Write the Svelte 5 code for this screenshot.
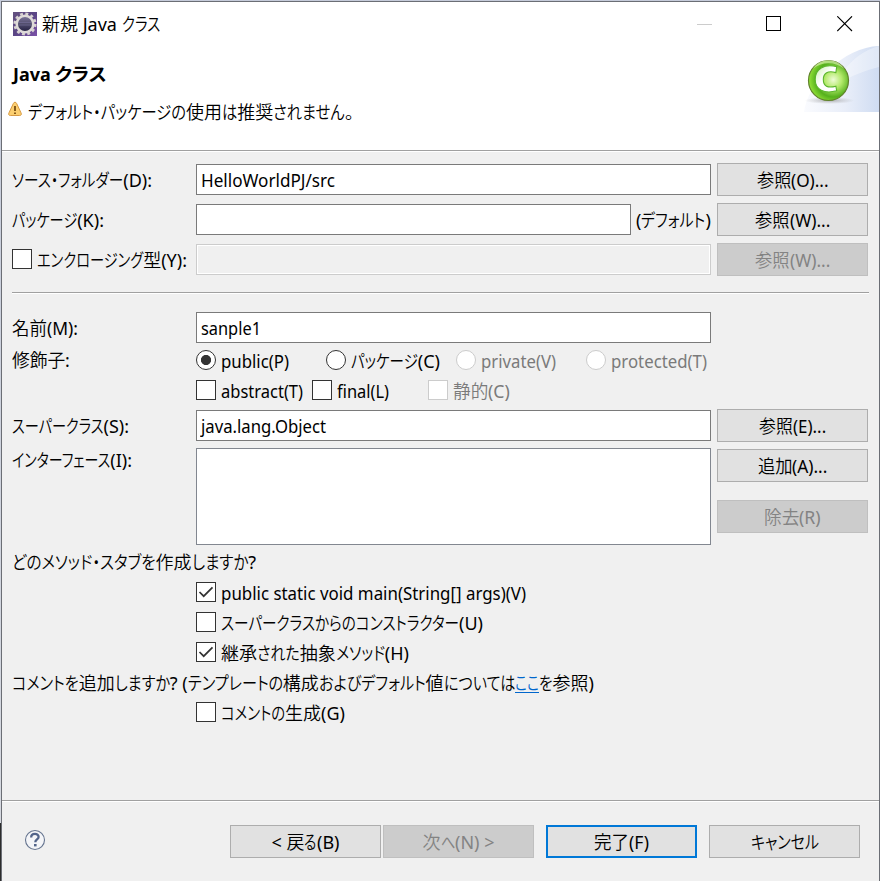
<script>
    let pkg = $state('');
    let name = $state('sanple1');

    const access = [
        { label: 'public(P)', width: 68, checked: true },
        { label: 'パッケージ(C)', width: 89 },
        { label: 'private(V)', width: 75, disabled: true },
        { label: 'protected(T)', width: 96, disabled: true },
    ];

    const modifiers = [
        { label: 'abstract(T)', width: 82 },
        { label: 'final(L)', width: 52 },
        { label: '静的(C)', width: 57, disabled: true },
    ];

    const stubs = [
        { label: 'public static void main(String[] args)(V)', width: 305, checked: true },
        { label: 'スーパークラスからのコンストラクター(U)', width: 262 },
        { label: '継承された抽象メソッド(H)', width: 188, checked: true },
    ];

    // kana are set narrower than kanji and latin, so they get their own runs
    function split(str) {
        return str.match(/[\u3041-\u30ff]+|[\u3001-\u3002\u4e00-\u9fff]+|[ -~]+/g) ?? [];
    }

    function isKana(run) {
        return /[\u3041-\u30ff]/.test(run);
    }

    function isKanji(run) {
        return /[\u3001-\u3002\u4e00-\u9fff]/.test(run);
    }

    // squeeze the kana runs (or the whole text when there are none) to the wanted width
    function fit(node, width) {
        const runs = [...node.children];
        const kana = runs.filter((r) => r.classList.contains('kana'));
        const flexible = kana.length ? kana : runs;
        const total = runs.reduce((sum, r) => sum + r.getBoundingClientRect().width, 0);
        const flex = flexible.reduce((sum, r) => sum + r.getBoundingClientRect().width, 0);
        const k = (width - (total - flex)) / flex;
        for (const r of flexible) {
            const w = r.getBoundingClientRect().width;
            r.style.width = `${w * k}px`;
            r.firstElementChild.style.transform = `scaleX(${k})`;
        }
    }
</script>

{#snippet text(str, width)}
    <span class="text" use:fit={width}>{#each split(str) as run}<span class="run" class:kana={isKana(run)} class:kanji={isKanji(run)}><span class="glyphs">{run}</span></span>{/each}</span>
{/snippet}

{#snippet button(str, width, kind = '')}
    <button class="btn {kind}" disabled={kind === 'disabled'}>{@render text(str, width)}</button>
{/snippet}

{#snippet check(item)}
    <label class="option" class:off={item.disabled}>
        <span class="box">
            {#if item.checked}
                <svg width="18" height="18" viewBox="0 0 18 18"><path d="M2.5 9 L6.7 13.2 L15.5 4.4" fill="none" stroke="#333" stroke-width="1.7" /></svg>
            {/if}
        </span>
        {@render text(item.label, item.width)}
    </label>
{/snippet}

<div class="desktop">
    <div class="window">
        <div class="titlebar">
            <svg class="app-icon" width="24" height="24" viewBox="0 0 24 24">
                <defs>
                    <linearGradient id="purple" x1="0" y1="0" x2="1" y2="1">
                        <stop offset="0" stop-color="#64527f" />
                        <stop offset="0.5" stop-color="#5a4585" />
                        <stop offset="1" stop-color="#7b52a8" />
                    </linearGradient>
                    <linearGradient id="hole" x1="0" y1="0" x2="0" y2="1">
                        <stop offset="0" stop-color="#8078a0" />
                        <stop offset="0.45" stop-color="#555170" />
                        <stop offset="1" stop-color="#1f1b3f" />
                    </linearGradient>
                </defs>
                <rect width="24" height="24" fill="url(#purple)" />
                <circle cx="12" cy="12" r="10.3" fill="none" stroke="#d8d3d2" stroke-width="2.6" stroke-dasharray="2.9 2.5" />
                <circle cx="12" cy="12" r="8.3" fill="url(#hole)" stroke="#dedad8" stroke-width="2.6" />
                <path d="M5.5 10.5h13M5.5 13h13" stroke="#706a92" stroke-width="0.8" />
            </svg>
            {@render text('新規 Java クラス', 118)}
            <div class="controls">
                <svg width="16" height="16" viewBox="0 0 16 16"><path d="M0 8.5h15" stroke="#ccc" /></svg>
                <svg width="16" height="16" viewBox="0 0 16 16"><rect x="0.5" y="0.5" width="14" height="14" fill="none" stroke="#000" /></svg>
                <svg width="16" height="16" viewBox="0 0 16 16"><path d="M0.3 0.3 L15 15 M15 0.3 L0.3 15" stroke="#000" stroke-width="1.1" /></svg>
            </div>
        </div>

        <header>
            <div class="heading">
                <h1>{@render text('Java クラス', 94)}</h1>
                <p>
                    <svg width="14" height="16" viewBox="0 0 14 16">
                        <path d="M7 1.2 C7.9 1.2 8.3 1.8 8.7 2.6 L13 11.8 C13.8 13.5 13.2 14.5 11.7 14.5 H2.3 C0.8 14.5 0.2 13.5 1 11.8 L5.3 2.6 C5.7 1.8 6.1 1.2 7 1.2Z" fill="#fccf70" stroke="#d79a45" />
                        <path d="M7 5v5M7 11.4v1.6" stroke="#70450b" stroke-width="1.7" />
                    </svg>
                    {@render text('デフォルト・パッケージの使用は推奨されません。', 335)}
                </p>
            </div>
            <svg class="banner" width="75" height="66" viewBox="0 0 75 66">
                <defs>
                    <linearGradient id="sky">
                        <stop offset="0" stop-color="#fafbfe" />
                        <stop offset="0.55" stop-color="#e9eef9" />
                        <stop offset="1" stop-color="#cfdcf2" />
                    </linearGradient>
                    <radialGradient id="ball" cx="0.62" cy="0.48" r="0.6">
                        <stop offset="0" stop-color="#eefcd6" />
                        <stop offset="0.35" stop-color="#b4ea6c" />
                        <stop offset="0.72" stop-color="#55b01c" />
                        <stop offset="1" stop-color="#8fe036" />
                    </radialGradient>
                    <radialGradient id="shade">
                        <stop offset="0" stop-color="#777" stop-opacity="0.55" />
                        <stop offset="1" stop-color="#999" stop-opacity="0" />
                    </radialGradient>
                    <linearGradient id="letter" x1="0" y1="0" x2="1" y2="1">
                        <stop offset="0" stop-color="#c9efac" />
                        <stop offset="0.45" stop-color="#fff" />
                        <stop offset="1" stop-color="#fff" />
                    </linearGradient>
                </defs>
                <path d="M0 66 C3 38 40 1 75 0 V66Z" fill="url(#sky)" />
                <path d="M38 28 C48 12 61 4 75 0 V21 C60 25 49 29 38 36Z" fill="#fff" opacity="0.35" />
                <ellipse cx="25.5" cy="54.5" rx="25" ry="3.5" fill="url(#shade)" />
                <circle cx="24.5" cy="34.5" r="20" fill="url(#ball)" stroke="#62822e" stroke-width="1.2" />
                <path d="M8.5 23 A19 19 0 0 1 40.5 23 A25 25 0 0 0 8.5 23Z" fill="#e6f9bd" opacity="0.6" />
                <path d="M32.7 20.6 L31.9 26.6 C23 24 19.3 28 19.3 33.5 C19.3 40 23.5 42.5 31.9 40.2 L32.7 44.8 C20 48.2 11.2 43.5 11.2 33.5 C11.2 23 20 17.6 32.7 20.6Z" fill="url(#letter)" stroke="#5bb52c" stroke-width="1.1" />
            </svg>
        </header>

        <main>
            <div class="row">
                <span class="label">{@render text('ソース・フォルダー(D):', 140)}</span>
                <div class="field">{@render text('HelloWorldPJ/src', 134)}</div>
                {@render button('参照(O)...', 72)}
            </div>
            <div class="row">
                <span class="label">{@render text('パッケージ(K):', 92)}</span>
                <div class="with-hint">
                    <input class="field" bind:value={pkg} />
                    {@render text('(デフォルト)', 75)}
                </div>
                {@render button('参照(W)...', 75)}
            </div>
            <div class="row">
                <span class="label">{@render check({ label: 'エンクロージング型(Y):', width: 150 })}</span>
                <div class="field off"></div>
                {@render button('参照(W)...', 75, 'disabled')}
            </div>

            <div class="rule"></div>

            <div class="row name">
                <span class="label">{@render text('名前(M):', 66)}</span>
                <div class="field">{@render text(name, 60)}</div>
            </div>
            <div class="row radios">
                <span class="label">{@render text('修飾子:', 58)}</span>
                <div class="options">
                    {#each access as item}
                        <label class="option" class:off={item.disabled}>
                            <span class="radio" class:on={item.checked}></span>
                            {@render text(item.label, item.width)}
                        </label>
                    {/each}
                </div>
            </div>
            <div class="row checks">
                <span class="label"></span>
                <div class="options">
                    {#each modifiers as item}
                        {@render check(item)}
                    {/each}
                </div>
            </div>
            <div class="row super">
                <span class="label">{@render text('スーパークラス(S):', 117)}</span>
                <div class="field">{@render text('java.lang.Object', 125)}</div>
                {@render button('参照(E)...', 67)}
            </div>
            <div class="row interfaces">
                <span class="label">{@render text('インターフェース(I):', 120)}</span>
                <div class="list"></div>
                <div class="stack">
                    {@render button('追加(A)...', 70)}
                    {@render button('除去(R)', 57, 'disabled')}
                </div>
            </div>

            <div class="question">{@render text('どのメソッド・スタブを作成しますか?', 244)}</div>
            <div class="stubs">
                {#each stubs as item}
                    {@render check(item)}
                {/each}
            </div>
            <div class="question comments">
                {@render text('コメントを追加しますか? (テンプレートの構成およびデフォルト値については', 503)}<a href="#top">{@render text('ここ', 24)}</a>{@render text('を参照)', 55)}
            </div>
            <div class="stubs">
                {@render check({ label: 'コメントの生成(G)', width: 124 })}
            </div>
        </main>

        <footer>
            <svg width="22" height="22" viewBox="0 0 22 22">
                <circle cx="11" cy="11" r="9.5" fill="#f4f5f8" stroke="#65748f" stroke-width="1.1" />
                <path d="M7.2 8.4 C7.2 3.8 14.8 4 14.6 8 C14.5 10.4 11.3 10.5 11.3 13.2" fill="none" stroke="#52648a" stroke-width="2.3" />
                <rect x="10" y="15" width="2.6" height="2.4" fill="#52648a" />
            </svg>
            <div class="nav">
                {@render button('< 戻る(B)', 68)}
                {@render button('次へ(N) >', 72, 'disabled')}
            </div>
            {@render button('完了(F)', 55, 'primary')}
            {@render button('キャンセル', 68)}
        </footer>
    </div>
</div>

<style>
    :global(body) {
        margin: 0;
    }

    .desktop {
        box-sizing: border-box;
        width: 880px;
        height: 881px;
        padding: 1px 0 0 1px;
        overflow: hidden;
        background: linear-gradient(#c5cbda 0, #d6d9e0 823px, #2c2c2c 823px);
        color: #000;
        font-family: "Noto Sans", "Noto Sans CJK JP", sans-serif;
        font-size: 18px;
        line-height: 24px;
    }

    .window {
        box-sizing: border-box;
        display: flex;
        flex-direction: column;
        height: 880px;
        border: 1px solid #6b6e75;
        border-bottom: 0;
        background: #f0f0f0;
    }

    .text {
        display: inline-flex;
        white-space: pre;
    }

    .run {
        display: inline-block;
        height: 24px;
    }

    .glyphs {
        display: inline-block;
        transform-origin: 0 50%;
    }

    .kana,
    .kanji {
        font-weight: 350;
    }

    .kana {
        font-feature-settings: "palt";
    }

    .titlebar {
        display: flex;
        align-items: center;
        height: 43px;
        padding-left: 11px;
        background: #fff;
    }

    .titlebar > .text {
        margin-left: 5px;
    }

    .controls {
        display: flex;
        margin: 0 26px 0 auto;
    }

    .controls svg {
        margin-left: 55px;
    }

    .controls svg:nth-child(2) {
        margin-left: 53px;
    }

    header {
        display: flex;
        justify-content: space-between;
        height: 105px;
        background: #fff;
        border-bottom: 1px solid #a0a0a0;
    }

    .heading {
        padding: 17px 0 0 11px;
    }

    h1 {
        margin: 0;
        font-size: 18px;
        line-height: 24px;
        font-weight: 700;
    }

    h1 .kana {
        font-weight: 700;
    }

    header p {
        display: flex;
        margin: 14px 0 0 -5px;
    }

    header p svg {
        margin: 1px 6px 0 0;
    }

    .banner {
        margin-top: 1px;
    }

    main {
        box-sizing: border-box;
        flex: 1;
        padding: 11px 10px 0;
        border-top: 1px solid #fff;
    }

    .row {
        display: grid;
        grid-template-columns: 184px 515px 151px;
        grid-template-rows: 100%;
        align-items: center;
        height: 33px;
        margin-bottom: 7px;
    }

    .row > :nth-child(3) {
        margin-left: 6px;
        margin-right: -6px;
    }

    .label {
        display: flex;
    }

    .field {
        box-sizing: border-box;
        height: 31px;
        padding: 3px 4px 0;
        border: 1px solid #7a7a7a;
        background: #fff;
    }

    .field.off {
        border-color: #ccc;
        background: #f0f0f0;
        box-shadow: inset 0 0 0 1px #fff;
    }

    .with-hint {
        display: flex;
        justify-content: space-between;
        align-items: center;
    }

    .with-hint .field {
        width: 435px;
        font: inherit;
        outline: 0;
    }

    .btn {
        box-sizing: border-box;
        display: flex;
        justify-content: center;
        width: 151px;
        height: 33px;
        padding: 4px 0 0;
        border: 1px solid #adadad;
        background: #e1e1e1;
        color: #000;
        font: inherit;
    }

    .btn.disabled {
        border-color: #bfbfbf;
        background: #ccc;
        color: #838383;
    }

    .btn.primary {
        padding-top: 3px;
        border: 2px solid #0078d7;
    }

    .rule {
        height: 1px;
        margin: 16px 0 18px;
        border-top: 1px solid #a0a0a0;
        background: #fff;
    }

    .row.name {
        height: 31px;
    }

    .row.radios {
        height: 20px;
        margin-bottom: 10px;
    }

    .row.checks {
        height: 20px;
        margin-bottom: 9px;
    }

    .row.super {
        margin-bottom: 6px;
    }

    .row.interfaces {
        height: 97px;
        margin-bottom: 6px;
        align-items: start;
    }

    .options {
        display: grid;
        grid-template-columns: repeat(4, 130px);
    }

    .checks .options {
        grid-template-columns: repeat(3, 116px);
    }

    .option {
        display: flex;
        align-items: center;
        gap: 5px;
        height: 20px;
    }

    .option .text {
        margin-top: 1px;
    }

    .label .option {
        margin-top: -1px;
    }

    .option.off {
        color: #7a7a7a;
    }

    .box,
    .radio {
        box-sizing: border-box;
        flex: none;
        width: 20px;
        height: 20px;
        border: 1px solid #333;
        background: #fff;
    }

    .box svg {
        display: block;
    }

    .radio {
        border-radius: 50%;
    }

    .radio.on {
        background: radial-gradient(circle, #333 4.7px, #fff 5.4px);
    }

    .off .box,
    .off .radio {
        border-color: #ccc;
    }

    .list {
        box-sizing: border-box;
        height: 97px;
        border: 1px solid #828790;
        background: #fff;
    }

    .stack {
        display: flex;
        flex-direction: column;
        gap: 18px;
        padding-top: 1px;
    }

    .question {
        display: flex;
        height: 32px;
        margin-top: -1px;
    }

    .question.comments {
        height: 31px;
    }

    .question a {
        color: #0066cc;
        text-decoration: none;
        height: 21px;
        border-bottom: 1px solid #0066cc;
    }

    .stubs {
        display: grid;
        row-gap: 10px;
        padding-left: 184px;
        margin-bottom: 10px;
    }

    footer {
        box-sizing: border-box;
        display: flex;
        gap: 12px;
        height: 81px;
        padding: 24px 19px 0 22px;
        border-top: 1px solid #a0a0a0;
        box-shadow: inset 0 1px #fff;
    }

    footer > svg {
        margin: 4px auto 0 0;
    }

    .nav {
        display: flex;
        gap: 2px;
    }
</style>
